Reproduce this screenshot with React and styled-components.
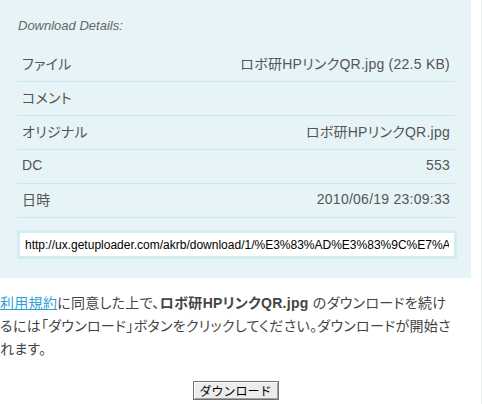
import styled, { createGlobalStyle } from "styled-components";

const GlobalStyle = createGlobalStyle`
  body {
    margin: 0;
    background: #fff;
    font-family: "Liberation Sans", "Noto Sans CJK JP", sans-serif;
    font-feature-settings: "palt";
  }
`;

const Page = styled.div`
  width: 481px;
  height: 404px;
  border-right: 1px solid #e3edf0;
`;

const Panel = styled.div`
  width: 471px;
  box-sizing: border-box;
  background: #e6f4f8;
  padding: 18px 16px 19px 17px;
`;

const Caption = styled.div`
  font-size: 13px;
  font-style: italic;
  color: #666;
  height: 30px;
  padding-left: 1px;
`;

const Row = styled.div`
  display: flex;
  justify-content: space-between;
  align-items: center;
  height: 34px;
  box-sizing: border-box;
  padding: 0 5px 3px;
  border-bottom: 1px solid #c9e7ee;
  font-size: 14px;
  letter-spacing: 0.25px;
  color: #555;
`;

const UrlBox = styled.input`
  display: block;
  width: 440px;
  height: 29px;
  box-sizing: border-box;
  margin-top: 12px;
  border: 3px solid #d4ebf2;
  background: #fff;
  padding: 0 5px;
  font-family: "Liberation Sans", sans-serif;
  font-size: 12px;
  color: #000;
  outline: none;
`;

const Notice = styled.p`
  margin: 14px 0 0;
  font-size: 14px;
  line-height: 23px;
  letter-spacing: 0.3px;
  color: #444;
`;

const Link = styled.a`
  color: #2f9fd2;
  text-decoration: underline;
`;

const ButtonRow = styled.div`
  width: 471px;
  display: flex;
  justify-content: center;
  margin-top: 20px;
`;

const Button = styled.button`
  width: 86px;
  height: 19px;
  padding: 0;
  font-family: "Noto Sans CJK JP", sans-serif;
  font-size: 12px;
  line-height: 1;
  color: #000;
  background: #ececec;
  border: 1px solid #707070;
  box-shadow: inset 1px 1px 0 #fff, inset -1px -1px 0 #a0a0a0;
`;

const rows = [
  ["ファイル", "ロボ研HPリンクQR.jpg (22.5 KB)"],
  ["コメント", ""],
  ["オリジナル", "ロボ研HPリンクQR.jpg"],
  ["DC", "553"],
  ["日時", "2010/06/19 23:09:33"],
];

const App = () => {
  return (
    <>
      <GlobalStyle />
      <Page>
        <Panel>
          <Caption>Download Details:</Caption>
          {rows.map(([label, value]) => (
            <Row key={label}>
              <span>{label}</span>
              <span>{value}</span>
            </Row>
          ))}
          <UrlBox
            readOnly
            value="http://ux.getuploader.com/akrb/download/1/%E3%83%AD%E3%83%9C%E7%A0%94HP%E3%83%AA%E3%83%B3%E3%82%AFQR.jpg"
          />
        </Panel>
        <Notice>
          <Link href="#">利用規約</Link>に同意した上で、<b>ロボ研HPリンクQR.jpg</b> のダウンロードを続け
          <br />
          るには「ダウンロード」ボタンをクリックしてください。ダウンロードが開始さ
          <br />
          れます。
        </Notice>
        <ButtonRow>
          <Button>ダウンロード</Button>
        </ButtonRow>
      </Page>
    </>
  );
};

export default App;
